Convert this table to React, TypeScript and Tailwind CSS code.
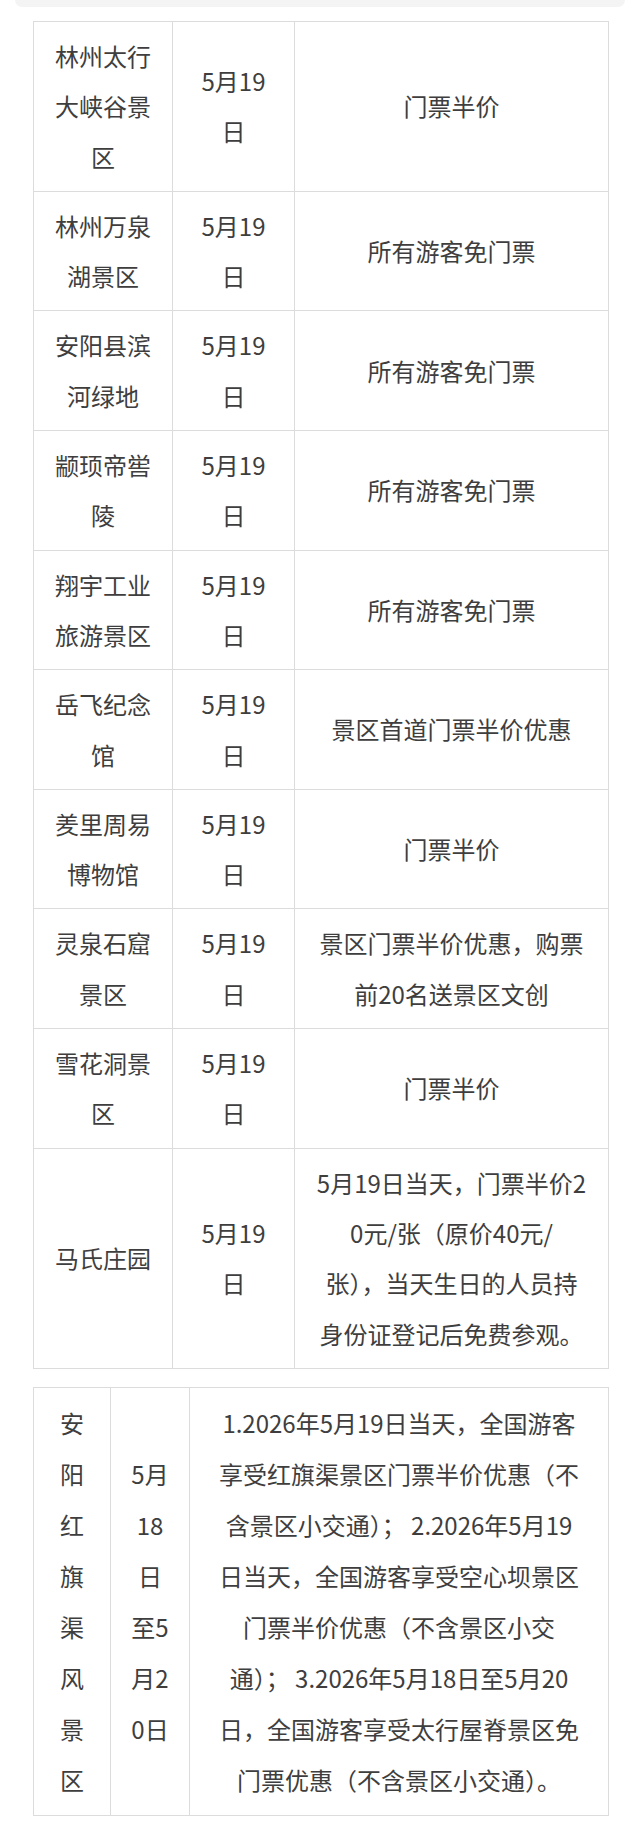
import React from "react";

type Row = { name: string[]; date: string[]; desc: string[] };

const rows: Row[] = [
  { name: ["林州太行", "大峡谷景", "区"], date: ["5月19", "日"], desc: ["门票半价"] },
  { name: ["林州万泉", "湖景区"], date: ["5月19", "日"], desc: ["所有游客免门票"] },
  { name: ["安阳县滨", "河绿地"], date: ["5月19", "日"], desc: ["所有游客免门票"] },
  { name: ["颛顼帝喾", "陵"], date: ["5月19", "日"], desc: ["所有游客免门票"] },
  { name: ["翔宇工业", "旅游景区"], date: ["5月19", "日"], desc: ["所有游客免门票"] },
  { name: ["岳飞纪念", "馆"], date: ["5月19", "日"], desc: ["景区首道门票半价优惠"] },
  { name: ["羑里周易", "博物馆"], date: ["5月19", "日"], desc: ["门票半价"] },
  { name: ["灵泉石窟", "景区"], date: ["5月19", "日"], desc: ["景区门票半价优惠，购票", "前20名送景区文创"] },
  { name: ["雪花洞景", "区"], date: ["5月19", "日"], desc: ["门票半价"] },
  {
    name: ["马氏庄园"],
    date: ["5月19", "日"],
    desc: ["5月19日当天，门票半价2", "0元/张（原价40元/", "张），当天生日的人员持", "身份证登记后免费参观。"],
  },
];

function Lines({ lines }: { lines: string[] }) {
  return (
    <>
      {lines.map((l, i) => (
        <span key={i} className="block whitespace-pre">
          {l}
        </span>
      ))}
    </>
  );
}

const font = { fontFamily: '"Noto Sans CJK SC", "Noto Sans", sans-serif' };

export default function App() {
  const cell1 = "border border-[#dcdcdc] px-0 py-[9px] text-center align-middle";
  const cell2 = "border border-[#dcdcdc] px-0 py-[9.5px] text-center align-middle";
  return (
    <div className="w-[640px] min-h-[1833px] bg-white text-[#3e3e3e] text-[24px]" style={font}>
      <div className="mx-[15px] h-[7px] rounded-b-[10px] bg-[#f4f4f4]" />
      <table className="ml-[33px] mt-[14px] w-[575px] table-fixed border-collapse leading-[50.3px]">
        <colgroup>
          <col className="w-[139px]" />
          <col className="w-[122px]" />
          <col className="w-[314px]" />
        </colgroup>
        <tbody>
          {rows.map((r, i) => (
            <tr key={i}>
              <td className={cell1}>
                <Lines lines={r.name} />
              </td>
              <td className={cell1}>
                <Lines lines={r.date} />
              </td>
              <td className={cell1}>
                <Lines lines={r.desc} />
              </td>
            </tr>
          ))}
        </tbody>
      </table>
      <table className="ml-[33px] mt-[18px] w-[575px] table-fixed border-collapse leading-[51px]">
        <colgroup>
          <col className="w-[77px]" />
          <col className="w-[79px]" />
          <col className="w-[419px]" />
        </colgroup>
        <tbody>
          <tr>
            <td className={cell2}>
              <Lines lines={["安", "阳", "红", "旗", "渠", "风", "景", "区"]} />
            </td>
            <td className={cell2}>
              <Lines lines={["5月", "18", "日", "至5", "月2", "0日"]} />
            </td>
            <td className={cell2}>
              <Lines
                lines={[
                  "1.2026年5月19日当天，全国游客",
                  "享受红旗渠景区门票半价优惠（不",
                  "含景区小交通）； 2.2026年5月19",
                  "日当天，全国游客享受空心坝景区",
                  "门票半价优惠（不含景区小交",
                  "通）； 3.2026年5月18日至5月20",
                  "日，全国游客享受太行屋脊景区免",
                  "门票优惠（不含景区小交通）。",
                ]}
              />
            </td>
          </tr>
        </tbody>
      </table>
    </div>
  );
}
